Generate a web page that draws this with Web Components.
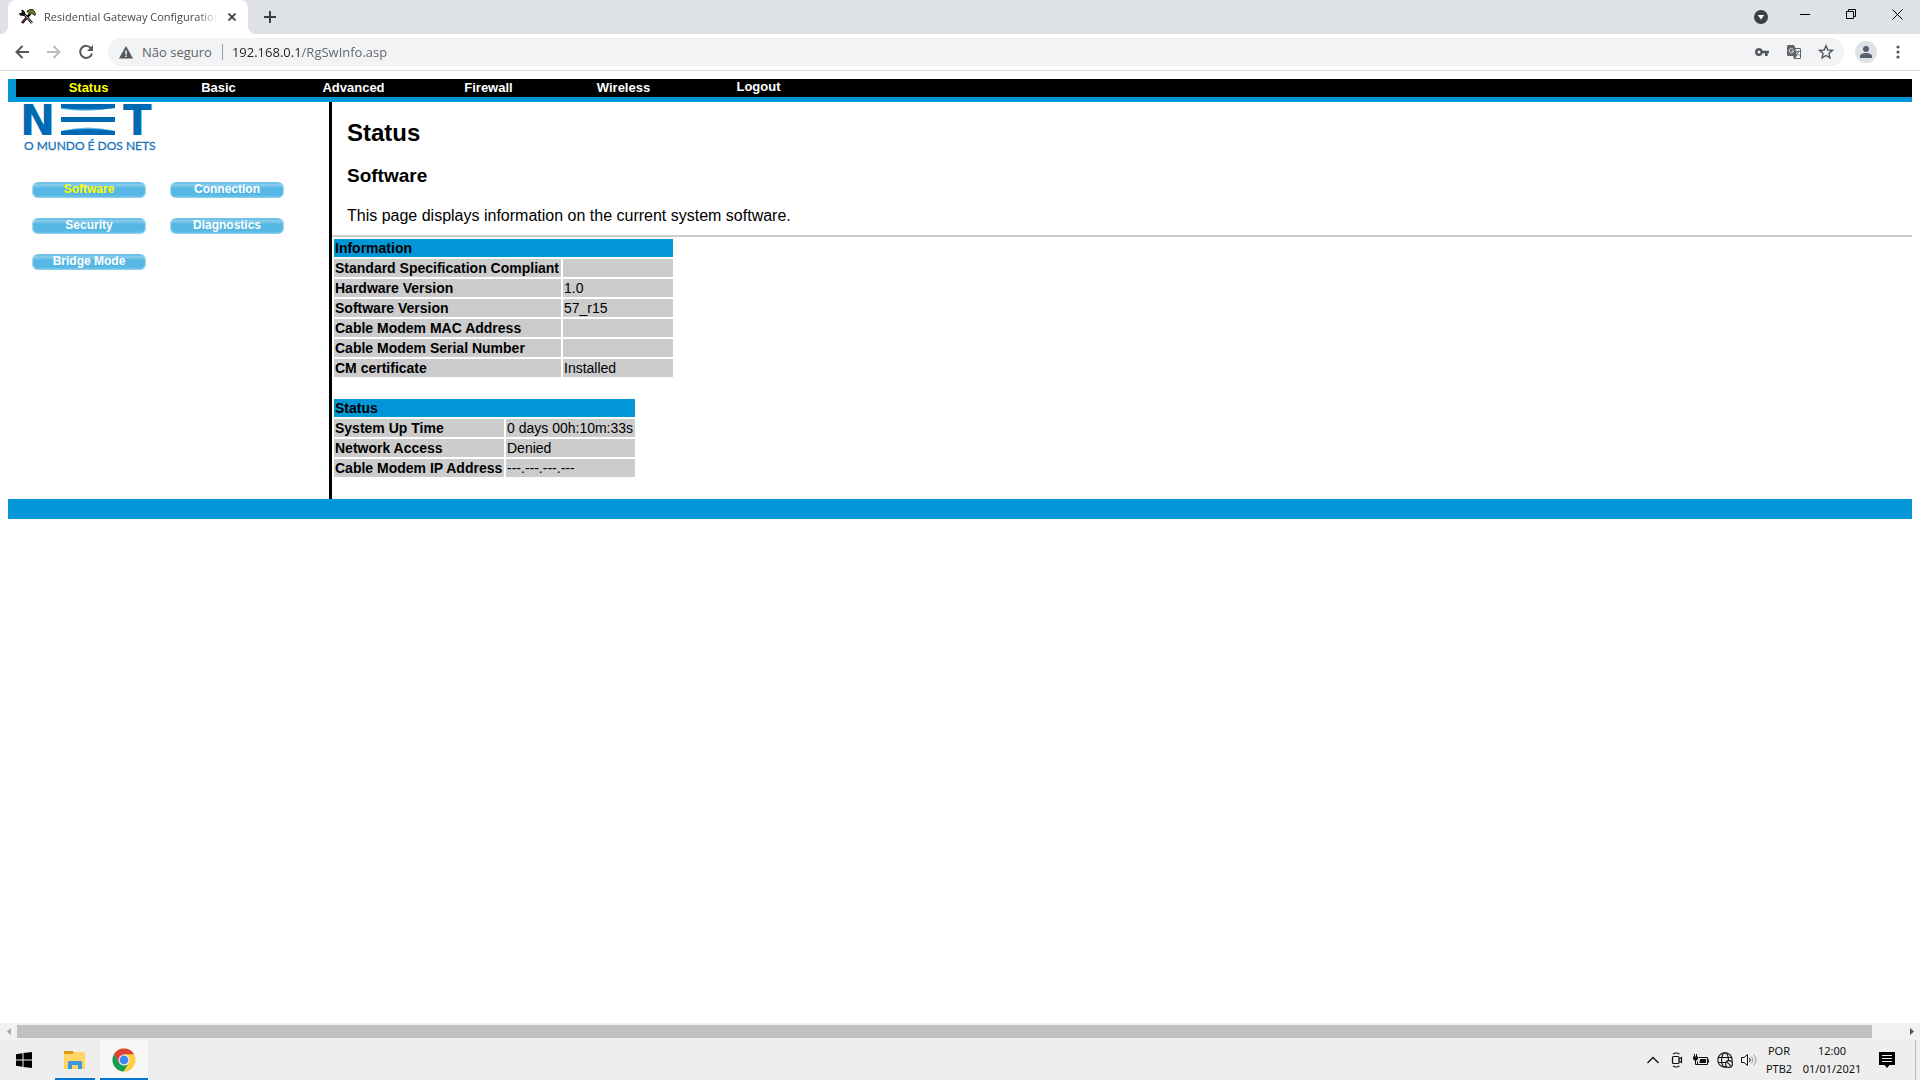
<!DOCTYPE html>
<html lang="pt-BR">
<head>
<meta charset="utf-8">
<title>Residential Gateway Configuration</title>
<style>
html, body { height: 100%; margin: 0; }
body { display: flex; flex-direction: column; background: #fff; overflow: hidden; font-family: "Liberation Sans", Arial, sans-serif; }
gateway-page { flex: 1; min-height: 0; }
</style>
</head>
<body>
<browser-tabs>Residential Gateway Configuration</browser-tabs>
<browser-toolbar></browser-toolbar>
<gateway-page></gateway-page>
<scroll-rail></scroll-rail>
<task-bar></task-bar>

<script>
function define(name, css, html) {
  const t = document.createElement('template');
  t.innerHTML = `<style>
    :host, * { box-sizing: border-box; }
    button { border: 0; padding: 0; margin: 0; background: none; font: inherit; color: inherit; display: flex; align-items: center; justify-content: center; }
    a { text-decoration: none; color: inherit; }
    svg { display: block; flex: none; }
    ${css}</style>${html}`;
  customElements.define(name, class extends HTMLElement {
    constructor() {
      super();
      this.attachShadow({ mode: 'open' }).append(t.content.cloneNode(true));
    }
  });
}

/* Tab strip */
define('browser-tabs', `
  :host { display: flex; height: 34px; background: #dee1e6; font: 11px/34px "Open Sans", "Noto Sans", sans-serif; color: #45494d; padding-left: 8px; }
  .tab { position: relative; display: flex; align-items: center; width: 240px; padding: 0 4px 0 11px; background: #fff; border-radius: 8px 8px 0 0; }
  .tab::before, .tab::after { content: ""; position: absolute; bottom: 0; width: 8px; height: 8px; }
  .tab::before { left: -8px; background: radial-gradient(circle at 0 0, transparent 8px, #fff 8px); }
  .tab::after { right: -8px; background: radial-gradient(circle at 100% 0, transparent 8px, #fff 8px); }
  .title { flex: 1; margin: 0 2px 0 8px; overflow: hidden; white-space: nowrap; -webkit-mask-image: linear-gradient(to right, #000 88%, transparent 100%); }
  .x { width: 24px; height: 34px; }
  .new { width: 28px; margin-left: 8px; }
  .fill { flex: 1; }
  .search { width: 42px; }
  .win { width: 46px; height: 28px; }
`, `
  <div class="tab">
    <svg width="17" height="16" viewBox="0 0 17 16"><path d="M3 14 11 5M5 5l8 9" stroke="#000" stroke-width="2.600"/><path d="M3.500 13.500 9 7.500" stroke="#b33" stroke-width="1"/><path d="M6 6l7 8" stroke="#ddd" stroke-width=".9"/><path d="M0 4h2l1-1-1-2h2l2 2v3L4.500 7 1 6.500z" fill="#111"/><path d="M8 2l3-1.500h3l2.500 4-.5 2-3-2-2 1-2-2z" fill="#77751a" stroke="#111" stroke-width=".8"/></svg>
    <span class="title"><slot></slot></span>
    <button class="x" aria-label="Fechar guia"><svg width="8" height="8"><path d="M.5.5l7 7M7.500.5l-7 7" stroke="#3c4043" stroke-width="1.800"/></svg></button>
  </div>
  <button class="new" aria-label="Nova guia"><svg width="12" height="12"><path d="M6 0v12M0 6h12" stroke="#3c4043" stroke-width="2"/></svg></button>
  <div class="fill"></div>
  <button class="search" aria-label="Pesquisar guias"><svg width="14" height="14"><circle cx="7" cy="7" r="7" fill="#3c4043"/><path d="M3.800 5h6.400L7 9.600z" fill="#fff"/></svg></button>
  <button class="win" aria-label="Minimizar"><svg width="10" height="10"><path d="M0 5.500h10" stroke="#000"/></svg></button>
  <button class="win" aria-label="Restaurar"><svg width="10" height="10" fill="none" stroke="#000"><path d="M.5 2.500h7v7h-7zM2.500 2.500v-2h7v7h-2"/></svg></button>
  <button class="win" aria-label="Fechar"><svg width="11" height="11"><path d="M.5.5l10 10M10.500.5l-10 10" stroke="#000"/></svg></button>
`);

/* Address bar row */
define('browser-toolbar', `
  :host { display: flex; align-items: center; height: 37px; padding: 0 6px; background: #fff; border-bottom: 1px solid #d9dbdf; font: 13px/28px "Open Sans", "Noto Sans", sans-serif; color: #5f6368; }
  button { width: 32px; height: 28px; }
  .box { flex: 1; display: flex; align-items: center; height: 28px; margin: 0 6px; padding: 0 2px 0 11px; background: #f1f3f4; border-radius: 14px; }
  label { margin-left: 9px; padding-right: 10px; display: flex; align-items: center; }
  .bar { width: 1px; height: 16px; background: #9aa0a6; }
  input { flex: 1; height: 28px; margin-left: 9px; padding: 0; border: 0; outline: 0; font: inherit; color: #5f6368;
    background: linear-gradient(to right, #202124 69px, #5f6368 69px); -webkit-background-clip: text; background-clip: text; -webkit-text-fill-color: transparent; }
`, `
  <button aria-label="Voltar"><svg width="14" height="14" fill="none" stroke="#54585d" stroke-width="2"><path d="M14 7H1.500M7.500 1l-6 6 6 6"/></svg></button>
  <button aria-label="Avançar"><svg width="14" height="14" fill="none" stroke="#babcbe" stroke-width="2"><path d="M0 7h12.500M6.500 1l6 6-6 6"/></svg></button>
  <button aria-label="Atualizar"><svg width="16" height="16" fill="none" stroke="#54585d" stroke-width="2"><path d="M13.200 4.500A6 6 0 1 0 14 9.500"/><path d="M15 1v6H9z" fill="#54585d" stroke="none"/></svg></button>
  <div class="box">
    <svg width="14" height="13"><path d="M7 0l7 12.500H0z" fill="#54585d"/><path d="M7 4.500v4M7 9.500v1.600" stroke="#f1f3f4" stroke-width="1.600"/></svg>
    <label for="url">Não seguro</label><span class="bar"></span>
    <input id="url" type="text" value="192.168.0.1/RgSwInfo.asp">
    <button aria-label="Senhas"><svg width="14" height="8"><path d="M4 0a4 4 0 1 0 3.800 5.300H10V8h2.700V5.300H14V2.700H7.800A4 4 0 0 0 4 0zm0 2.500a1.500 1.500 0 1 1 0 3 1.500 1.500 0 0 1 0-3z" fill="#54585d" fill-rule="evenodd"/></svg></button>
    <button aria-label="Traduzir"><svg width="14" height="14"><path d="M1 0h6l1.400 3H13l1 1v9l-1 1H7l-1-3H1l-1-1V1z" fill="#5f6368"/><path d="M8.500 4h4.500v9H8l2-2z" fill="#f1f3f4"/><path d="M6.300 4.300A2.300 2.300 0 1 0 6.700 6H4.500" fill="none" stroke="#f1f3f4"/><path d="M9 6.500h4M11.500 5.500C11.500 8 10.500 9.500 9.500 10M9.700 7.500c.6 1.500 1.500 2.300 2.800 3" fill="none" stroke="#5f6368" stroke-width=".8"/></svg></button>
    <button aria-label="Favoritos"><svg width="16" height="16"><path d="M8 1.800l1.800 4.200 4.600.4-3.500 3 1.100 4.500L8 11.500l-4 2.400 1.100-4.500-3.500-3 4.600-.4z" fill="none" stroke="#54585d" stroke-width="1.400"/></svg></button>
  </div>
  <button aria-label="Perfil"><svg width="22" height="22"><circle cx="11" cy="11" r="11" fill="#dee1e6"/><circle cx="11" cy="8" r="3" fill="#546072"/><path d="M5 17v-2c0-2 3.500-3 6-3s6 1 6 3v2z" fill="#546072"/></svg></button>
  <button aria-label="Menu"><svg width="4" height="14" fill="#54585d"><circle cx="2" cy="2" r="1.600"/><circle cx="2" cy="7" r="1.600"/><circle cx="2" cy="12" r="1.600"/></svg></button>
`);

/* Router administration page */
define('gateway-page', `
  :host { display: block; padding: 8px 8px 0; overflow: hidden; }
  .cols { display: flex; }
  side-menu { width: 321px; flex: none; }
  main { flex: 1; border-left: 3px solid #000; padding-bottom: 20px; }
  header { padding: 0 15px; }
  h1 { margin: 0; padding-top: 17px; font-size: 24px; line-height: 28px; }
  h3 { margin: 18px 0 0; font-size: 19px; line-height: 22px; }
  p { margin: 20px 0 0; font-size: 16px; line-height: 18px; }
  hr { margin: 10px 0 0; border: 0; height: 2px; background: #ccc; }
  table { border-spacing: 2px; font-size: 14px; line-height: 16px; table-layout: fixed; }
  table + table { margin-top: 18px; }
  .info { width: 343px; }
  .state { width: 305px; }
  .info col:first-child { width: 227px; }
  .state col:first-child { width: 170px; }
  th, td { padding: 1px; height: 18px; text-align: left; background: #ccc; white-space: nowrap; }
  thead th { background: #0397d7; }
  footer { height: 20px; background: #0397d7; }
`, `
  <top-nav></top-nav>
  <div class="cols">
    <side-menu></side-menu>
    <main>
      <header><h1>Status</h1><h3>Software</h3>
      <p>This page displays information on the current system software.</p></header>
      <hr>
      <table class="info"><colgroup><col><col></colgroup>
        <thead><tr><th colspan="2">Information</th></tr></thead>
        <tbody>
        <tr><th scope="row">Standard Specification Compliant</th><td></td></tr>
        <tr><th scope="row">Hardware Version</th><td>1.0</td></tr>
        <tr><th scope="row">Software Version</th><td>57_r15</td></tr>
        <tr><th scope="row">Cable Modem MAC Address</th><td></td></tr>
        <tr><th scope="row">Cable Modem Serial Number</th><td></td></tr>
        <tr><th scope="row">CM certificate</th><td>Installed</td></tr>
        </tbody></table>
      <table class="state"><colgroup><col><col></colgroup>
        <thead><tr><th colspan="2">Status</th></tr></thead>
        <tbody>
        <tr><th scope="row">System Up Time</th><td>0 days 00h:10m:33s</td></tr>
        <tr><th scope="row">Network Access</th><td>Denied</td></tr>
        <tr><th scope="row">Cable Modem IP Address</th><td>---.---.---.---</td></tr>
        </tbody></table>
    </main>
  </div>
  <footer></footer>
`);

define('top-nav', `
  :host { display: block; border-left: 8px solid #0397d7; border-bottom: 5px solid #0397d7; background: #000; color: #fff; font-weight: bold; font-size: 13px; }
  nav { display: grid; grid-template-columns: repeat(6, 135px); height: 18px; line-height: 18px; text-align: center; }
  .on { color: #ff0; padding-left: 10px; }
  .out { line-height: 16px; }
`, `<nav><a class="on" href="#status">Status</a><a href="#basic">Basic</a><a href="#advanced">Advanced</a><a href="#firewall">Firewall</a><a href="#wireless">Wireless</a><a class="out" href="#logout">Logout</a></nav>`);

define('side-menu', `
  :host { display: block; }
  svg { margin: 1px 0 0 16px; overflow: visible; }
  nav { display: grid; grid-template-columns: repeat(2, 114px); gap: 20px 24px; padding: 31px 0 0 24px; }
`, `
  <svg width="140" height="48" viewBox="0 0 140 48" role="img" aria-label="NET">
    <g fill="#0069b4" font-family="DejaVu Sans" font-weight="bold" font-size="42"><text x="-4" y="32">N</text><text x="99" y="32">T</text></g>
    <path d="M37 3H91V5Q64 10 37 6zM37 19Q64 14 91 19V16H37zM37 28Q64 21 91 28V32H37z" fill="#5bb8ea"/>
    <path d="M37 1H91V5Q64 8 37 5zM37 14H91V19H37zM37 28Q64 24 91 28V32H37z" fill="#0069b4"/>
    <text x="0" y="47" font-family="Lato" font-size="12" fill="#1b75bb" stroke="#1b75bb" stroke-width=".3">O MUNDO É DOS NETS</text>
  </svg>
  <nav><pill-link class="on">Software</pill-link><pill-link>Connection</pill-link><pill-link>Security</pill-link><pill-link>Diagnostics</pill-link><pill-link>Bridge Mode</pill-link></nav>
`);

define('pill-link', `
  :host { display: block; height: 16px; color: #fff; font: bold 12px/14px "Liberation Sans", Arial, sans-serif; text-align: center; }
  :host(.on) { color: #ff0; }
  a { display: block; height: 16px; border-radius: 6px; background: linear-gradient(#55b7e3, #8ccdec 3px, #55b7e3 6px, #55b7e3 13px, #86caea); box-shadow: inset 1px 0 1px #b5dff3, inset -1px 0 1px #b5dff3; }
`, `<a href="#page"><slot></slot></a>`);

/* Horizontal scroll bar */
define('scroll-rail', `
  :host { display: flex; align-items: center; height: 17px; background: #f1f1f1; }
  button { width: 17px; height: 17px; }
  .track { flex: 1; padding-right: 31px; }
  .thumb { height: 13px; background: #c1c1c1; }
`, `
  <button aria-label="Rolar para a esquerda"><svg width="4" height="7"><path d="M4 0v7L0 3.500z" fill="#a3a3a3"/></svg></button>
  <div class="track"><div class="thumb"></div></div>
  <button aria-label="Rolar para a direita"><svg width="4" height="7"><path d="M0 0v7l4-3.500z" fill="#505050"/></svg></button>
`);

/* Windows task bar */
define('task-bar', `
  :host { display: flex; height: 40px; background: #eee; color: #111; font: 11px/18px "Noto Sans", sans-serif; }
  button { height: 40px; width: 24px; }
  .start { width: 48px; }
  .files { width: 40px; margin: 0 5px 0 7px; }
  .chrome { width: 48px; background: #f7f7f7; }
  .files, .chrome { border-bottom: 2px solid #0078d7; padding-top: 2px; }
  .fill { flex: 1; }
  .lang { width: 36px; }
  .clock { width: 70px; }
  .note { width: 40px; }
  .desk { width: 5px; margin-left: 8px; border-left: 1px solid #bbb; }
`, `
  <button class="start" aria-label="Iniciar"><svg width="16" height="16"><path d="M0 2.200L6.500 1.300V7.500H0zM7.500 1.100L16 0V7.500H7.500zM0 8.500H6.500V14.700L0 13.800zM7.500 8.500H16V16L7.500 14.900z"/></svg></button>
  <button class="files" aria-label="Explorador de Arquivos"><svg width="22" height="18"><path d="M0 0h9l1 2v3H0z" fill="#dd9d0b"/><path d="M0 3h9l1-2h11v17H0z" fill="#ffd666"/><path d="M4 18v-7l1-1h12l1 1v7h-4v-4H8v4z" fill="#3a96dd"/></svg></button>
  <button class="chrome" aria-label="Google Chrome"><svg width="24" height="24" viewBox="0 0 24 24"><circle cx="12" cy="12" r="11.500" fill="#ffcd40"/><path d="M2 6.300A11.500 11.500 0 0 1 22 6.300H12L7 15z" fill="#db4437"/><path d="M2 6.300L7 15q2 3.500 8.500 2L11.500 23.500A11.500 11.500 0 0 1 2 6.300z" fill="#0f9d58"/><circle cx="12" cy="12" r="5.400" fill="#f1f1f1"/><circle cx="12" cy="12" r="4.400" fill="#4285f4"/></svg></button>
  <div class="fill"></div>
  <button aria-label="Mostrar ícones ocultos"><svg width="12" height="8"><path d="M.5 7L6 1.500 11.500 7" fill="none" stroke="#111" stroke-width="1.300"/></svg></button>
  <button aria-label="Reunir agora"><svg width="12" height="16" fill="none" stroke="#111" stroke-width="1.200"><rect x="1.500" y="4.500" width="6.500" height="7" rx="1"/><path d="M8 7l2.500-1.500v5L8 9M2 2Q5 0 8.500 2M2 14Q5 16 8.500 14"/></svg></button>
  <button aria-label="Bateria"><svg width="16" height="12"><path d="M5.500 3.500h9v7H4.500v-3" fill="none" stroke="#111"/><path d="M7 5h6v4H6.500z" fill="#111"/><path d="M15.500 5.500v3" stroke="#111"/><path d="M1.500 0v3M3.500 0v3M2.500 6v4.500h2" fill="none" stroke="#111"/><path d="M0 2.500h5v2l-1 2H1l-1-2z" fill="#111"/></svg></button>
  <button aria-label="Rede"><svg width="16" height="16" fill="none" stroke="#111" stroke-width="1.100"><circle cx="8" cy="8" r="7.200"/><ellipse cx="8" cy="8" rx="3.500" ry="7.200"/><path d="M1 5.500h14M1 10.500h14"/><circle cx="12" cy="12" r="3.400" fill="#eee"/><path d="M9.800 9.800l4.500 4.500"/></svg></button>
  <button aria-label="Volume"><svg width="16" height="14" fill="none" stroke="#111"><path d="M.5 4.500H3L6.500 1.500v11L3 9.500H.5z"/><path d="M8.500 5q1.500 2 0 4"/><path d="M10.500 3.500q3 3.500 0 7M12.800 1.500q4.500 5.500 0 11" stroke="#999"/></svg></button>
  <button class="lang"><span>POR<br>PTB2</span></button>
  <button class="clock"><span>12:00<br>01/01/2021</span></button>
  <button class="note" aria-label="Notificações"><svg width="16" height="16"><path d="M0 0h16v13h-5.500L8 16l-2.500-3H0z"/><path d="M3 3.500h10M3 6.500h10M3 9.500h10" stroke="#eee"/></svg></button>
  <div class="desk"></div>
`);
</script>
</body>
</html>
